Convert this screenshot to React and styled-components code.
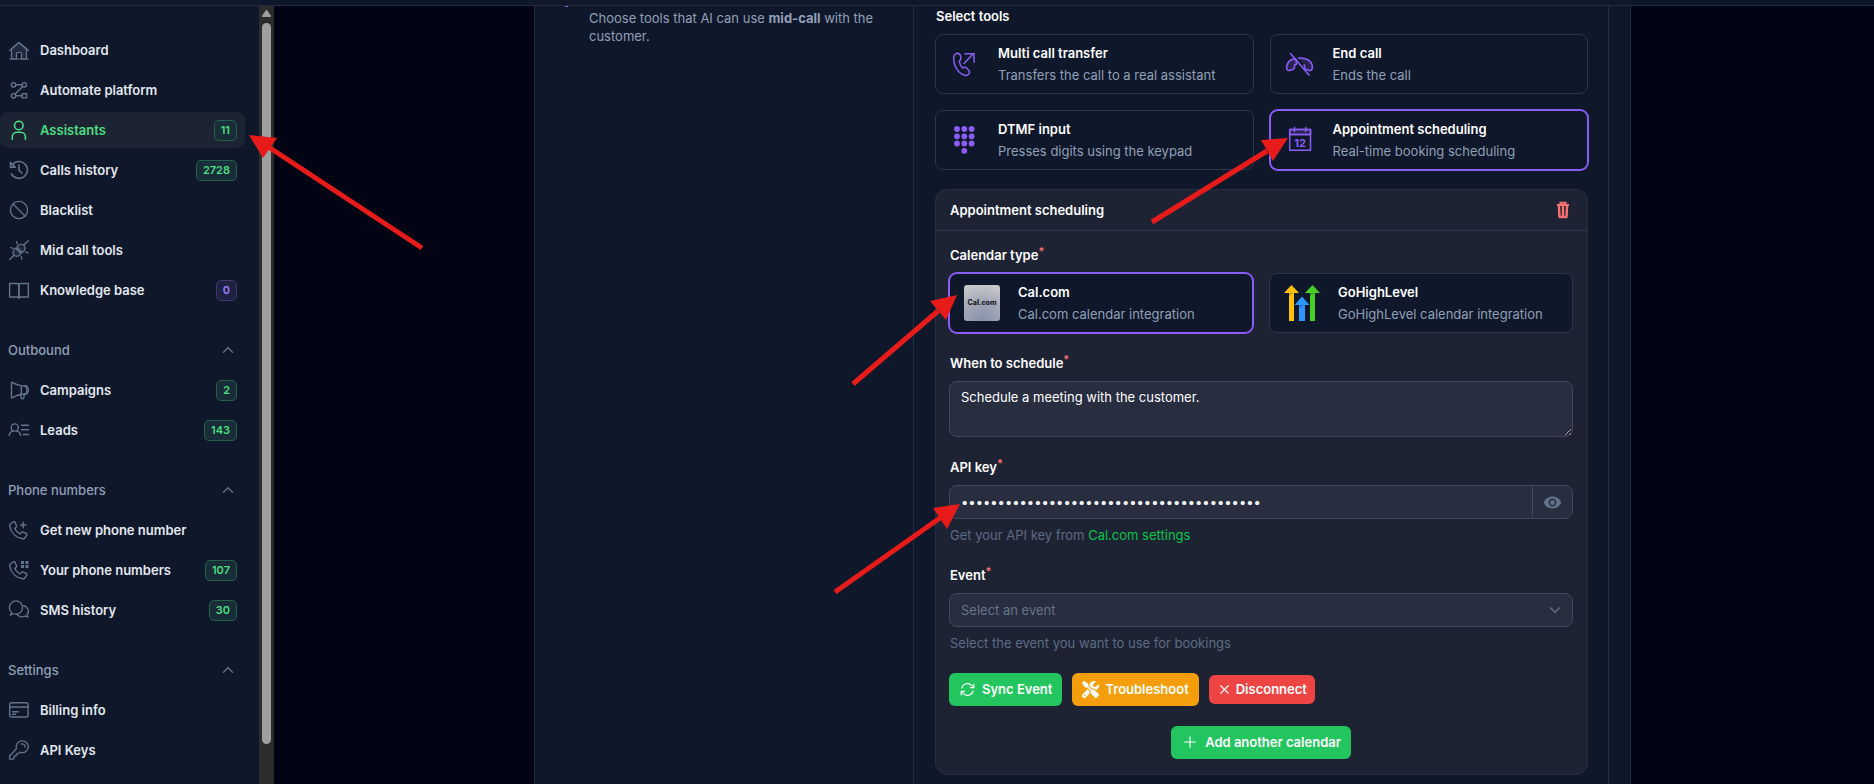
import React from "react";
import styled, { createGlobalStyle, css } from "styled-components";
import { ChevronUp, ChevronDown, Plus, X } from "lucide-react";
import { HiOutlineArrowPath } from "react-icons/hi2";
import { FaScrewdriverWrench } from "react-icons/fa6";
import { MdVisibility } from "react-icons/md";

const c = {
  page: "#020414",
  surface: "#0f172a",
  line: "#232c3f",
  cardLine: "#2c374a",
  panel: "#1e2334",
  panelLine: "#262f42",
  field: "#282d3f",
  fieldLine: "#42485a",
  text: "#e2e8f0",
  white: "#ffffff",
  muted: "#90a0b7",
  dim: "#64748b",
  green: "#4ade80",
  link: "#05c649",
  violet: "#8b5cf6",
  red: "#f87171",
};

const GlobalStyle = createGlobalStyle`
  *, *::before, *::after { box-sizing: border-box; }
  body {
    margin: 0;
    background: ${c.page};
    color: ${c.text};
    font: 400 13px/18px Inter, "Liberation Sans", sans-serif;
    overflow: hidden;
  }
  button, input, select, textarea { font: inherit; color: inherit; margin: 0; }
`;

const Page = styled.div`
  position: relative;
  display: flex;
  flex-direction: column;
  height: 100vh;
  overflow: hidden;
`;

const TopBar = styled.header`
  flex: 0 0 6px;
  background: ${c.surface};
  border-bottom: 1px solid ${c.line};
`;

const Columns = styled.div`
  display: flex;
  flex: 1;
  min-height: 0;
`;

/* ---------- Sidebar ---------- */

const Sidebar = styled.aside`
  flex: 0 0 274px;
  display: flex;
  background: ${c.surface};
  overflow: hidden;
`;

const Nav = styled.nav`
  flex: 1;
  display: flex;
  flex-direction: column;
  gap: 24px;
  padding: 26px 14px 0 0;
`;

const NavGroup = styled.div`
  display: flex;
  flex-direction: column;
  gap: 4px;
`;

const GroupToggle = styled.button`
  display: flex;
  align-items: center;
  justify-content: space-between;
  height: 36px;
  padding: 0 8px;
  border: 0;
  background: none;
  color: ${c.muted};
  font-weight: 500;
  cursor: pointer;
  svg { color: ${c.dim}; }
`;

const NavItem = styled.a`
  display: flex;
  align-items: center;
  gap: 10px;
  height: 36px;
  padding: 0 8px;
  border-radius: 8px;
  color: ${(p) => (p.$active ? c.green : c.text)};
  background: ${(p) => (p.$active ? "#1c2333" : "transparent")};
  font-weight: 600;
  text-decoration: none;
  svg { flex: none; color: ${(p) => (p.$active ? c.green : c.dim)}; }
`;

const NavLabel = styled.span`
  flex: 1;
`;

const Badge = styled.span`
  height: 21px;
  padding: 0 6px;
  border-radius: 5px;
  font-size: 11px;
  line-height: 18px;
  font-weight: 600;
  ${(p) =>
    p.$tone === "violet"
      ? css`
          color: #9b7ff8;
          background: #1f2142;
          border: 1px solid #3d3a6b;
        `
      : css`
          color: ${c.green};
          background: #182d37;
          border: 1px solid #23624a;
        `}
`;

const ScrollTrack = styled.div`
  flex: 0 0 15px;
  display: flex;
  flex-direction: column;
  align-items: center;
  gap: 6px;
  padding: 4px 0 40px;
  background: #2c2c2c;
`;

const ScrollThumb = styled.div`
  flex: 1;
  width: 9px;
  border-radius: 5px;
  background: #9f9f9f;
`;

/* ---------- Main ---------- */

const Main = styled.main`
  flex: 1;
  min-width: 0;
  padding-left: 17px;
`;

const Panel = styled.section`
  display: grid;
  grid-template-columns: 378px 1fr;
  max-width: 1097px;
  height: 100%;
  margin: 0 auto;
  padding-right: 21px;
  background: ${c.surface};
  border: solid ${c.line};
  border-width: 0 1px;
`;

const Intro = styled.div`
  display: flex;
  align-items: flex-start;
  gap: 21px;
  padding: 0 24px 0 30px;
  color: ${c.muted};
`;

const IntroMark = styled.span`
  flex: 0 0 3px;
  height: 1px;
  background: ${c.violet};
`;

const IntroText = styled.p`
  margin: 3px 0 0;
`;

const Tools = styled.div`
  border: solid ${c.line};
  border-width: 0 1px;
  padding: 1px 20px 0 21px;
`;

const Label = styled.label`
  display: block;
  padding-left: 1px;
  color: ${c.white};
  font-weight: 600;
  sup {
    color: ${c.red};
    font-size: 11px;
    line-height: 0;
  }
`;

const Choices = styled.div`
  display: grid;
  grid-template-columns: 1fr 1fr;
  gap: 16px;
  margin-top: ${(p) => (p.$loose ? 9 : 8)}px;
`;

const Choice = styled.button`
  display: flex;
  align-items: center;
  gap: 18px;
  height: 60px;
  padding: 0 14px;
  text-align: left;
  background: ${c.surface};
  border: 1px solid ${(p) => (p.$selected ? c.violet : c.cardLine)};
  box-shadow: ${(p) => (p.$selected ? `0 0 0 1px ${c.violet}` : "none")};
  border-radius: 8px;
  cursor: pointer;
  svg { flex: none; color: ${c.violet}; }
`;

const ChoiceText = styled.span`
  display: flex;
  flex-direction: column;
  gap: 4px;
  padding-bottom: 1px;
  color: ${c.muted};
  strong { color: ${c.white}; font-weight: 600; }
`;

const CalLogo = styled.span`
  flex: none;
  width: 36px;
  height: 36px;
  border-radius: 3px;
  background: radial-gradient(circle at 50% 100%, #8791ab 0, #a4a8b8 50%, transparent 90%), #c6c6ca;
  color: #1a1a1f;
  font-size: 7px;
  line-height: 36px;
  font-weight: 800;
  text-align: center;
`;

const Config = styled.section`
  margin-top: 19px;
  background: ${c.panel};
  border: 1px solid ${c.panelLine};
  border-radius: 12px;
`;

const ConfigHeader = styled.header`
  display: flex;
  align-items: center;
  justify-content: space-between;
  height: 41px;
  padding: 0 17px 1px 14px;
  border-bottom: 1px solid #2f3649;
`;

const ConfigTitle = styled.h2`
  margin: 0;
  color: ${c.white};
  font-size: 13px;
  line-height: 18px;
  font-weight: 600;
`;

const IconButton = styled.button`
  display: flex;
  padding: 0;
  border: 0;
  background: none;
  color: ${c.red};
  cursor: pointer;
`;

const ConfigBody = styled.div`
  padding: 15px 14px 15px 13px;
`;

const Fields = styled.div`
  display: grid;
  gap: 21px;
`;

const Field = styled.div``;

const controlBox = css`
  width: 100%;
  background: ${c.field};
  border: 1px solid ${c.fieldLine};
  border-radius: 8px;
`;

const TextArea = styled.textarea`
  ${controlBox}
  display: block;
  height: 56px;
  margin-top: 9px;
  padding: 6px 11px;
  color: ${c.white};
  resize: vertical;
`;

const InputGroup = styled.div`
  ${controlBox}
  display: flex;
  height: 34px;
  margin-top: 9px;
  color: ${c.white};
  button {
    width: 40px;
    align-items: center;
    justify-content: center;
    border-left: 1px solid ${c.fieldLine};
    color: ${c.dim};
  }
`;

const BareInput = styled.input`
  flex: 1;
  min-width: 0;
  padding: 0 11px;
  background: none;
  border: 0;
  outline: 0;
`;

const SelectWrap = styled.div`
  ${controlBox}
  display: grid;
  height: 34px;
  margin-top: 9px;
  align-items: center;
  color: ${c.dim};
  select, svg { grid-area: 1 / 1; }
  svg { justify-self: end; margin-right: 8px; pointer-events: none; }
`;

const Select = styled.select`
  width: 100%;
  height: 32px;
  padding: 0 11px;
  appearance: none;
  background: none;
  border: 0;
  outline: 0;
`;

const Help = styled.p`
  margin: 7px 0 1px 1px;
  color: #5d6c84;
  a { color: ${c.link}; text-decoration: none; }
`;

const Actions = styled.div`
  display: flex;
  align-items: center;
  justify-content: ${(p) => (p.$center ? "center" : "flex-start")};
  gap: 10px;
  margin-top: 20px;
`;

const tones = { green: "#22c55e", amber: "#f59e0b", red: "#ef4444" };

const Button = styled.button`
  display: flex;
  align-items: center;
  gap: ${(p) => (p.$small ? 4 : 6)}px;
  height: ${(p) => (p.$small ? 29 : 33)}px;
  padding: 0 ${(p) => (p.$small ? 8 : 10)}px 1px;
  border: 0;
  border-radius: 6px;
  background: ${(p) => tones[p.$tone]};
  color: ${c.white};
  font-weight: 600;
  cursor: pointer;
`;

const ArrowLayer = styled.svg`
  position: absolute;
  top: 0;
  left: 0;
  overflow: visible;
  pointer-events: none;
  fill: #e81b1b;
  stroke: #e81b1b;
`;

/* ---------- Icons ---------- */

const Glyph = ({ size = 22, width = 1.2, children }) => (
  <svg
    width={size}
    height={size}
    viewBox={`0 0 ${size} ${size}`}
    fill="none"
    stroke="currentColor"
    strokeWidth={width}
    strokeLinecap="round"
    strokeLinejoin="round"
    aria-hidden="true"
  >
    {children}
  </svg>
);

const tint = { fill: "currentColor", fillOpacity: 0.2 };

const HomeIcon = () => (
  <Glyph>
    <path d="M3.5 10 11 3.5l7.5 6.5v10h-5v-5.5a1 1 0 0 0-1-1h-3a1 1 0 0 0-1 1V20h-5z" {...tint} />
    <path d="M1.5 11.5 11 3.5l9.5 8M1.5 20h19" />
  </Glyph>
);
const FlowIcon = () => (
  <Glyph width={1.4}>
    <circle cx="5.5" cy="5.8" r="2.2" />
    <circle cx="16.3" cy="5.8" r="2.2" />
    <circle cx="5.5" cy="16.8" r="2.2" />
    <rect x="14.2" y="14.7" width="4.4" height="4.2" />
    <path d="M7.7 5.8h6.4M14.700 7.500l-7.600 7.600M7.700 16.800h6.500" />
  </Glyph>
);
const PersonIcon = () => (
  <Glyph width={1.600}>
    <circle cx="10.800" cy="6.500" r="4.300" />
    <path d="M4.300 20.300v-2.600a4.600 4.600 0 0 1 4.600-4.500h3.900a4.600 4.600 0 0 1 4.600 4.500v2.600" />
  </Glyph>
);
const HistoryIcon = () => (
  <Glyph width={1.600}>
    <path d="M4.400 5.700A8.400 8.400 0 1 1 3.500 14.800" />
    <path d="M2.500 3.500v4.800h4.800zM11 6v5.300l2.800 2.700" />
  </Glyph>
);
const BanIcon = () => (
  <Glyph width={1.300}>
    <circle cx="11" cy="11" r="8.600" />
    <path d="m5 5 12 12" />
  </Glyph>
);
const PlugIcon = () => (
  <Glyph width={1.300}>
    <path d="M1.700 20.500 6 16.200M16 6l4.300-4.300M6.100 16.100c-1.600-1.600-1.600-4 0-5.500l1.500-1.500 5.500 5.500-1.500 1.500c-1.500 1.500-4 1.500-5.500 0z" {...tint} />
    <path d="m8.800 8 1.600-1.600c1.500-1.500 4-1.500 5.500 0s1.500 4 0 5.500l-1.600 1.600z" {...tint} />
    <path d="M8.500 2.500 9.300 5M2.500 8.500l2.500.8M17.500 13l2.700.8M13.200 17.300l.6 2.700M8 9.500l4.800 4.800" />
  </Glyph>
);
const BookIcon = () => (
  <Glyph width={1.400}>
    <path d="M1.600 4.500h7.300c1.200 0 2 .6 2 1.600v13c-.4-.8-1-1.100-2-1.100H1.600z" />
    <path d="M20.300 4.500H13c-1.200 0-2.100.6-2.100 1.600v13c.4-.8 1-1.100 2.100-1.100h7.300z" />
  </Glyph>
);
const MegaphoneIcon = () => (
  <Glyph width={1.400}>
    <path d="M3.500 4v14.200c0 .6.600.8 1 .5 3-2 7-4 14.300-3.700V7C11.500 7.200 7.500 5.200 4.500 3.300c-.4-.3-1-.1-1 .7z" />
    <path d="M13.300 6.800v8.500M16.500 7.200c5.200.3 5.200 7.300 0 7.600M12.500 15.500l.8 3.500c.5 1.200 2.300 1 2.500-.2l.5-3.500" />
  </Glyph>
);
const LeadsIcon = () => (
  <Glyph width={1.400}>
    <circle cx="6.800" cy="8.500" r="3.600" />
    <path d="M1.200 16.500c.4-2.500 2-4.300 4-4.600M12.600 16.500c-.4-2.500-2-4.300-4-4.600M13.500 6.200h7M13.500 10.700h7M15 15.500h5.500" />
  </Glyph>
);
const Handset = () => (
  <path d="M2.200 5.200 4.800 3c.7-.6 1.700-.4 2.100.4l1.500 3c.3.6.2 1.300-.3 1.800L6.800 9.500c1.100 2.400 2.900 4.200 5.300 5.300l1.400-1.400c.5-.5 1.200-.6 1.800-.3l2.800 1.400c.8.400 1 1.400.5 2.100l-2.100 2.600c-.4.500-1 .7-1.600.6C8 18.900 3 13.800 1.700 6.800c-.1-.6.100-1.200.5-1.600z" />
);
const PhonePlusIcon = () => (
  <Glyph width={1.400}>
    <Handset />
    <path d="M15.200 3.200v5.600M12.400 6H18" />
  </Glyph>
);
const PhoneDotsIcon = () => (
  <Glyph width={1.400}>
    <Handset />
    <path d="M13 3.500h3M17.500 3.500h3M13 7.500h3M17.500 7.500h3" strokeWidth="2.800" strokeLinecap="butt" />
  </Glyph>
);
const ChatIcon = () => (
  <Glyph width={1.300}>
    <path d="M2.400 16c.8-.9 1.100-1.700 1-2.600A6.600 6.600 0 1 1 8 15.200c-1.200 0-2.200-.3-3-.7-.8.800-1.700 1.300-2.600 1.500z" />
    <path d="M15.300 6.600c5 .9 6.400 6.200 3.700 9 0 .9.300 1.600 1 2.400-1.200-.1-2.100-.4-2.900-1-3 1.600-7.200.6-8.300-1.900" />
  </Glyph>
);
const BillingIcon = () => (
  <Glyph width={1.400}>
    <rect x="1.700" y="3.800" width="18.400" height="14.200" rx="2" />
    <path d="M2 8h18M4.500 12.700h6M4.500 15.200h3" />
  </Glyph>
);
const KeyIcon = () => (
  <Glyph width={1.300}>
    <path d="M14 1.800c3.500 0 6.300 2.400 6.300 5.900s-2.800 6-6.300 6c-.8 0-1.600-.2-2.300-.5l-1.500 1.600H8.300v2H6.200v2.100l-1 1.300H1.700v-3.500l6.600-6.700c-.9-4.200 1.800-8.200 5.700-8.200z" />
    <path d="M13.200 5c2.300-.5 4 .8 3.800 3.200" />
  </Glyph>
);

const TransferIcon = () => (
  <Glyph size={30} width={1.500}>
    <path d="M3.700 8.300C3.900 5.800 6 4 8.200 4.400c1.700.3 2.600 2 2.700 4.100.1 1.900-.7 3-1.700 3.900.5 2.400 1.700 4.700 3.300 6.500 1.300-.7 3-.9 4.300.3 1.700 1.600 3.400 2.900 2.700 4.500-.8 1.900-2.900 3-4.700 2.500C8.300 24.500 3.400 16.800 3.700 8.300z" />
    <path d="M14 14.500 22.500 5.500" />
    <path d="M16 4.700h9.500v9" strokeLinecap="butt" strokeLinejoin="miter" transform="translate(-1.500 0)" />
  </Glyph>
);
const EndCallIcon = () => (
  <Glyph size={30} width={1.600}>
    <path d="M10.800 10.300C7 9.600 2.500 12 1.700 17c-.2 1.300-.1 2.600.5 3.600.5.900 1.500 1.100 2.500.8l3-1c1-.4 1.700-1.200 1.800-2.200l.3-2.400 1.800-.6zM13.500 9.200c6.800-.9 13 2.500 13.800 7.800.2 1.300.1 2.600-.5 3.600-.5.900-1.500 1.100-2.500.8l-3-1c-1-.4-1.700-1.200-1.800-2.200l-.3-2.400" {...tint} />
    <path d="M5.500 4.500 24 26" />
  </Glyph>
);
const KeypadIcon = () => (
  <Glyph size={30}>
    <g fill="currentColor" stroke="none">
      {[[7, 4], [14.3, 4], [21.6, 4], [7, 11.3], [14.3, 11.3], [21.6, 11.3], [7, 18.5], [14.3, 18.5], [21.6, 18.5], [14.3, 25.8]].map(
        ([x, y]) => <circle key={`${x}-${y}`} cx={x} cy={y} r="2.9" />
      )}
    </g>
  </Glyph>
);
const CalendarIcon = () => (
  <Glyph size={30} width={1.500}>
    <path d="M4.700 4.500h20.800v5H4.700z" {...tint} />
    <path d="M4.700 4.500h20.800v20.700H4.700zM4.700 9.500h20.800M9.500 2.500v4M20.700 2.500v4" />
    <text x="15" y="21.500" textAnchor="middle" fill="currentColor" stroke="none" fontSize="11" fontWeight="700">12</text>
  </Glyph>
);
const TrashIcon = () => (
  <svg width="14" height="18" viewBox="0 0 14 18" fill="none" stroke="currentColor" aria-hidden="true">
    <path d="M1 4h12M4.500 3.500V1.700h5v1.800" strokeWidth="2" />
    <path d="M2.900 4.500 3.500 16h7l.6-11.500M7 5v10.500" strokeWidth="2.400" strokeLinejoin="round" />
  </svg>
);
const HighLevelLogo = () => (
  <svg width="36" height="36" viewBox="0 0 36 36" aria-hidden="true">
    <path fill="#ffc107" d="M7.500 0 15 8h-5v28H5V8H0z" />
    <path fill="#45cf27" d="M28.500 0 36 8h-5v28h-5V8h-5z" />
    <path fill="#2b96ff" d="M18 11.500 25.500 20H21v16h-6V20h-4.500z" />
    <path fill="#000" fillOpacity=".18" d="M5 8h5l-5 3zM26 8h5l-5 3zM15 20h6l-6 3z" />
  </svg>
);

/* ---------- Data ---------- */

const groups = [
  {
    items: [
      { label: "Dashboard", Icon: HomeIcon },
      { label: "Automate platform", Icon: FlowIcon },
      { label: "Assistants", Icon: PersonIcon, badge: "11", active: true },
      { label: "Calls history", Icon: HistoryIcon, badge: "2728" },
      { label: "Blacklist", Icon: BanIcon },
      { label: "Mid call tools", Icon: PlugIcon },
      { label: "Knowledge base", Icon: BookIcon, badge: "0", tone: "violet" },
    ],
  },
  {
    title: "Outbound",
    items: [
      { label: "Campaigns", Icon: MegaphoneIcon, badge: "2" },
      { label: "Leads", Icon: LeadsIcon, badge: "143" },
    ],
  },
  {
    title: "Phone numbers",
    items: [
      { label: "Get new phone number", Icon: PhonePlusIcon },
      { label: "Your phone numbers", Icon: PhoneDotsIcon, badge: "107" },
      { label: "SMS history", Icon: ChatIcon, badge: "30" },
    ],
  },
  {
    title: "Settings",
    items: [
      { label: "Billing info", Icon: BillingIcon },
      { label: "API Keys", Icon: KeyIcon },
    ],
  },
];

const tools = [
  { title: "Multi call transfer", text: "Transfers the call to a real assistant", icon: <TransferIcon /> },
  { title: "End call", text: "Ends the call", icon: <EndCallIcon /> },
  { title: "DTMF input", text: "Presses digits using the keypad", icon: <KeypadIcon /> },
  { title: "Appointment scheduling", text: "Real-time booking scheduling", icon: <CalendarIcon />, selected: true },
];

const calendars = [
  { title: "Cal.com", text: "Cal.com calendar integration", icon: <CalLogo>Cal.com</CalLogo>, selected: true },
  { title: "GoHighLevel", text: "GoHighLevel calendar integration", icon: <HighLevelLogo /> },
];

const arrows = [
  { shaft: "M270 148 422 248", head: "249,135 277,138 263,158" },
  { shaft: "M1267 151 1152 222", head: "1288,138 1261,140 1273,161" },
  { shaft: "M938 311 853 384", head: "957,295 930,301 946,320" },
  { shaft: "M940 518 835 592", head: "960,504 933,508 947,529" },
];

const ChoiceGrid = ({ options, labelledBy }) => (
  <Choices $loose role="group" aria-labelledby={labelledBy}>
    {options.map((o) => (
      <Choice key={o.title} type="button" $selected={o.selected} aria-pressed={!!o.selected}>
        {o.icon}
        <ChoiceText>
          <strong>{o.title}</strong>
          <span>{o.text}</span>
        </ChoiceText>
      </Choice>
    ))}
  </Choices>
);

export default function App() {
  return (
    <Page>
      <GlobalStyle />
      <TopBar />
      <Columns>
        <Sidebar>
          <Nav>
            {groups.map((g, i) => (
              <NavGroup key={i}>
                {g.title && (
                  <GroupToggle type="button">
                    {g.title}
                    <ChevronUp size={18} strokeWidth={1.75} />
                  </GroupToggle>
                )}
                {g.items.map(({ label, Icon, badge, tone, active }) => (
                  <NavItem key={label} href="#" $active={active}>
                    <Icon />
                    <NavLabel>{label}</NavLabel>
                    {badge && <Badge $tone={tone}>{badge}</Badge>}
                  </NavItem>
                ))}
              </NavGroup>
            ))}
          </Nav>
          <ScrollTrack>
            <svg width="9" height="7" viewBox="0 0 9 7" fill="#9f9f9f" aria-hidden="true">
              <path d="M3.7.5a1 1 0 0 1 1.6 0L8.800 5.500Q9.200 7 8 7H1Q-.2 7 .2 5.500z" />
            </svg>
            <ScrollThumb />
          </ScrollTrack>
        </Sidebar>
        <Main>
          <Panel>
            <Intro>
              <IntroMark />
              <IntroText>
                Choose tools that AI can use <b>mid-call</b> with the customer.
              </IntroText>
            </Intro>
            <Tools>
              <Label as="div" id="tools-label">Select tools</Label>
              <ChoiceGrid options={tools} labelledBy="tools-label" />
              <Config>
                <ConfigHeader>
                  <ConfigTitle>Appointment scheduling</ConfigTitle>
                  <IconButton type="button" aria-label="Remove">
                    <TrashIcon />
                  </IconButton>
                </ConfigHeader>
                <ConfigBody>
                  <Fields>
                    <Field>
                      <Label as="div" id="calendar-label">Calendar type<sup>*</sup></Label>
                      <ChoiceGrid options={calendars} labelledBy="calendar-label" />
                    </Field>
                    <Field>
                      <Label htmlFor="when">When to schedule<sup>*</sup></Label>
                      <TextArea id="when" defaultValue="Schedule a meeting with the customer." />
                    </Field>
                    <Field>
                      <Label htmlFor="api-key">API key<sup>*</sup></Label>
                      <InputGroup>
                        <BareInput id="api-key" type="password" defaultValue={"x".repeat(41)} />
                        <IconButton type="button" aria-label="Show API key">
                          <MdVisibility size={19} />
                        </IconButton>
                      </InputGroup>
                      <Help>
                        Get your API key from <a href="#">Cal.com settings</a>
                      </Help>
                    </Field>
                    <Field>
                      <Label htmlFor="event">Event<sup>*</sup></Label>
                      <SelectWrap>
                        <Select id="event">
                          <option>Select an event</option>
                        </Select>
                        <ChevronDown size={18} strokeWidth={1.75} />
                      </SelectWrap>
                      <Help>Select the event you want to use for bookings</Help>
                    </Field>
                  </Fields>
                  <Actions>
                    <Button type="button" $tone="green">
                      <HiOutlineArrowPath size={17} />
                      Sync Event
                    </Button>
                    <Button type="button" $tone="amber">
                      <FaScrewdriverWrench size={17} />
                      Troubleshoot
                    </Button>
                    <Button type="button" $tone="red" $small>
                      <X size={15} strokeWidth={1.75} />
                      Disconnect
                    </Button>
                  </Actions>
                  <Actions $center>
                    <Button type="button" $tone="green">
                      <Plus size={18} strokeWidth={1.5} />
                      Add another calendar
                    </Button>
                  </Actions>
                </ConfigBody>
              </Config>
            </Tools>
          </Panel>
        </Main>
      </Columns>
      <ArrowLayer width="100%" height="100%" aria-hidden="true">
        {arrows.map((a) => (
          <g key={a.head}>
            <path d={a.shaft} strokeWidth="5" />
            <polygon points={a.head} stroke="none" />
          </g>
        ))}
      </ArrowLayer>
    </Page>
  );
}
